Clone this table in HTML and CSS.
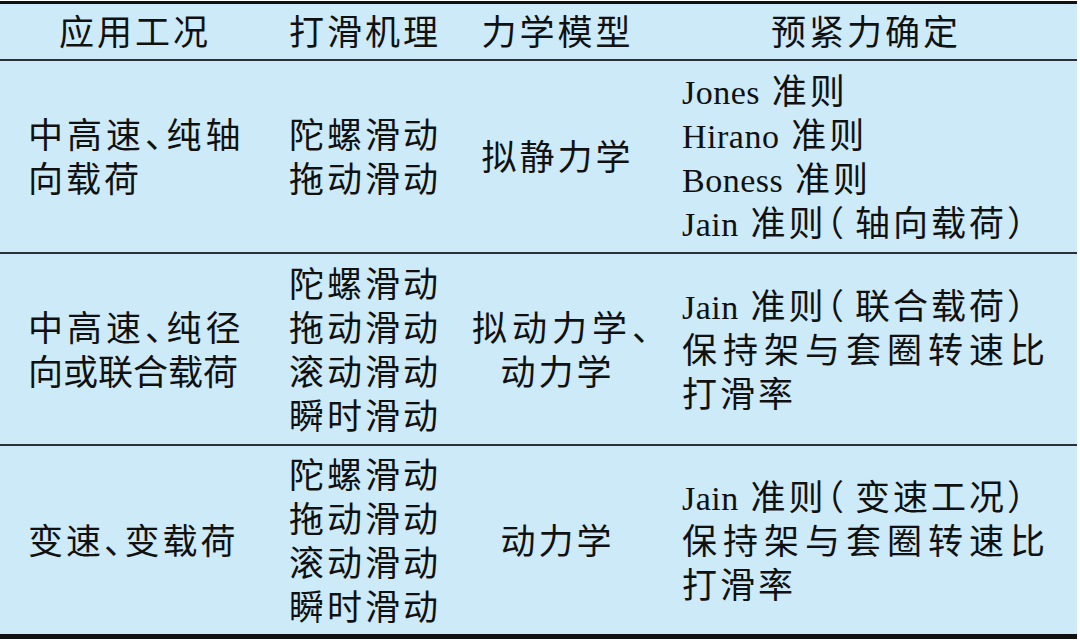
FILE: index.html
```html
<!DOCTYPE html>
<html lang="zh-CN">
<head>
<meta charset="utf-8">
<title>预紧力确定</title>
<link rel="stylesheet" href="styles.css">
</head>
<body>
<div class="tbl">
  <div class="row head">
    <div class="cell center">应用工况</div>
    <div class="cell center">打滑机理</div>
    <div class="cell center">力学模型</div>
    <div class="cell center">预紧力确定</div>
  </div>
  <div class="row r1">
    <div class="cell left c1"><span class="wide">中高速<span class="half">、</span>纯轴</span><br>向载荷</div>
    <div class="cell center">陀螺滑动<br>拖动滑动</div>
    <div class="cell center">拟静力学</div>
    <div class="cell left c4"><span class="lat">Jones</span> 准则<br><span class="lat">Hirano</span> 准则<br><span class="lat">Boness</span> 准则<br><span class="lat">Jain</span> 准则<span class="half paren">（</span>轴向载荷<span class="half">）</span></div>
  </div>
  <div class="row r2">
    <div class="cell left c1"><span class="wide">中高速<span class="half">、</span>纯径</span><br><span class="tight">向或联合载荷</span></div>
    <div class="cell center">陀螺滑动<br>拖动滑动<br>滚动滑动<br>瞬时滑动</div>
    <div class="cell center"><span class="wide3">拟动力学、</span><br>动力学</div>
    <div class="cell left c4"><span class="lat">Jain</span> 准则<span class="half paren">（</span>联合载荷<span class="half">）</span><br><span class="spread">保持架与套圈转速比</span><br>打滑率</div>
  </div>
  <div class="row r3">
    <div class="cell left c1">变速<span class="half">、</span>变载荷</div>
    <div class="cell center">陀螺滑动<br>拖动滑动<br>滚动滑动<br>瞬时滑动</div>
    <div class="cell center">动力学</div>
    <div class="cell left c4"><span class="lat">Jain</span> 准则<span class="half paren">（</span>变速工况<span class="half">）</span><br><span class="spread">保持架与套圈转速比</span><br>打滑率</div>
  </div>
</div>
</body>
</html>
```
FILE: styles.css
```css
html, body {
  margin: 0;
  padding: 0;
  background: #ffffff;
}
body {
  padding-top: 1px;
}
.tbl {
  width: 1077px;
  background: #cdeaf8;
  border-top: 3px solid #111111;
  color: #111111;
  font-family: "Liberation Serif", "Noto Sans CJK SC", serif;
  font-size: 35px;
  line-height: 44px;
  letter-spacing: 3px;
}
.row {
  display: grid;
  grid-template-columns: 270px 190px 195px 1fr;
  align-items: center;
  box-sizing: border-box;
  border-bottom: 2px solid #2a3036;
}
.head { height: 57px; }
.r1 { height: 193px; }
.r2 { height: 192px; }
.r3 { height: 193px; border-bottom: 5px solid #111111; }
.cell {
  white-space: nowrap;
  padding-top: 5px;
}
.center { text-align: center; }
.left { text-align: left; }
.c1 { padding-left: 28px; }
.c4 { padding-left: 27px; }
.lat {
  font-family: "Liberation Serif", serif;
  font-size: 34px;
  letter-spacing: 0.5px;
}
.half {
  font-feature-settings: "halt";
}
.paren {
  margin-right: 8px;
}
.wide { letter-spacing: 4px; }
.wide3 { letter-spacing: 5px; margin-left: 12px; }
.tight { letter-spacing: 0px; }
.spread { letter-spacing: 6px; }
```
